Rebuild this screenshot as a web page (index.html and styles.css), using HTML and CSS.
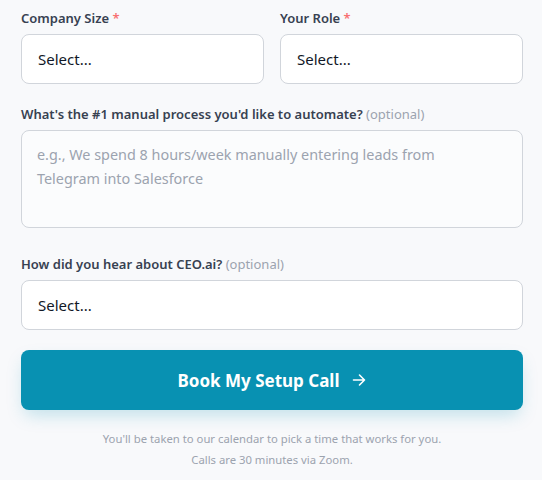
FILE: index.html
```html
<!DOCTYPE html>
<html lang="en">
<head>
<meta charset="utf-8">
<link rel="stylesheet" href="styles.css">
</head>
<body>
<form class="form">
  <div class="row">
    <div class="field">
      <label class="label">Company Size <span class="req">*</span></label>
      <div class="control">Select...</div>
    </div>
    <div class="field">
      <label class="label">Your Role <span class="req">*</span></label>
      <div class="control">Select...</div>
    </div>
  </div>
  <div class="field field-area">
    <label class="label">What's the #1 manual process you'd like to automate? <span class="opt">(optional)</span></label>
    <div class="textarea">e.g., We spend 8 hours/week manually entering leads from Telegram into Salesforce</div>
  </div>
  <div class="field">
    <label class="label">How did you hear about CEO.ai? <span class="opt">(optional)</span></label>
    <div class="control">Select...</div>
  </div>
  <button type="button" class="submit">Book My Setup Call
    <svg class="arrow" width="16" height="16" viewBox="0 0 16 16" fill="none" stroke="currentColor" stroke-width="1.6" stroke-linecap="round" stroke-linejoin="round"><path d="M2.5 8h11M8.5 3l5 5-5 5"/></svg>
  </button>
  <p class="note">You'll be taken to our calendar to pick a time that works for you.<br>Calls are 30 minutes via Zoom.</p>
</form>
</body>
</html>
```

FILE: styles.css
```css
html, body {
  margin: 0;
  padding: 0;
  background: #f8f9fb;
}
body {
  font-family: "Noto Sans", "Open Sans", sans-serif;
  color: #111827;
}
.form {
  width: 502px;
  padding: 8px 0 0 21px;
  display: flex;
  flex-direction: column;
  gap: 20px;
}
.row {
  display: grid;
  grid-template-columns: 1fr 1fr;
  gap: 16px;
}
.field {
  display: flex;
  flex-direction: column;
  gap: 6px;
}
.field-area {
  padding-bottom: 6px;
}
.label {
  font-size: 13px;
  line-height: 20px;
  font-weight: 600;
  color: #374151;
}
.req {
  color: #f87171;
}
.opt {
  font-weight: 400;
  color: #9ca3af;
}
.control {
  box-sizing: border-box;
  height: 50px;
  background: #fff;
  border: 1px solid #d1d5db;
  border-radius: 8px;
  padding: 0 16px;
  display: flex;
  align-items: center;
  font-size: 15px;
  color: #111827;
}
.textarea {
  box-sizing: border-box;
  height: 98px;
  background: #fbfcfd;
  border: 1px solid #d1d5db;
  border-radius: 8px;
  padding: 12px 70px 12px 15px;
  font-size: 14.4px;
  line-height: 24px;
  color: #9ca3af;
}
.submit {
  height: 60px;
  border: none;
  border-radius: 8px;
  background: #0891b2;
  color: #fff;
  font-family: inherit;
  font-size: 17px;
  font-weight: 700;
  display: flex;
  align-items: center;
  justify-content: center;
  gap: 11px;
  box-shadow: 0 8px 18px -4px rgba(8, 145, 178, 0.25);
}
.arrow {
  display: block;
}
.note {
  margin: -2px 0 0;
  text-align: center;
  font-size: 11.3px;
  line-height: 21px;
  color: #9ca3af;
}
```
